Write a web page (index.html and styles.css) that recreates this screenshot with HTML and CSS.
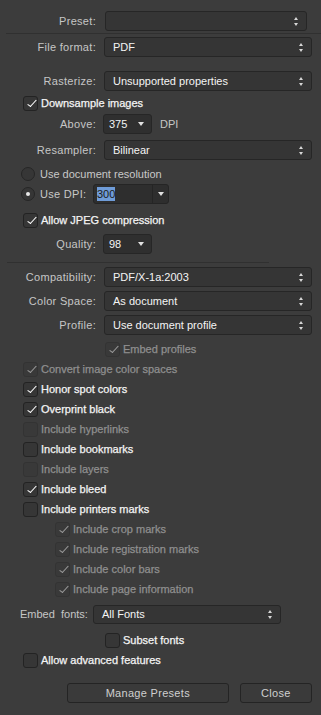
FILE: index.html
```html
<!DOCTYPE html>
<html lang="en">
<head>
    <meta charset="UTF-8">
    <meta name="viewport" content="width=device-width, initial-scale=1.0">
    <title>Export PDF</title>
    <link rel="stylesheet" href="styles.css">
</head>
<body>
    <div class="dialog">
        <div class="field field-preset">
            <span class="field-label">Preset:</span>
            <div class="select select-preset"><span></span><span class="updown"></span></div>
        </div>
        <div class="sep sep-top"></div>

        <div class="field mt-3">
            <span class="field-label">File format:</span>
            <div class="select"><span>PDF</span><span class="updown"></span></div>
        </div>
        <div class="field mt-14">
            <span class="field-label">Rasterize:</span>
            <div class="select"><span>Unsupported properties</span><span class="updown"></span></div>
        </div>

        <label class="check indent-1 mt-2">
            <span class="box checked"></span>
            <span class="check-text">Downsample images</span>
        </label>
        <div class="field mt-1">
            <span class="field-label">Above:</span>
            <div class="mini-select"><span>375</span><span class="down"></span></div>
            <span class="unit">DPI</span>
        </div>
        <div class="field mt-6">
            <span class="field-label">Resampler:</span>
            <div class="select"><span>Bilinear</span><span class="updown"></span></div>
        </div>

        <label class="radio-row mt-4">
            <span class="radio"></span>
            <span class="radio-text">Use document resolution</span>
        </label>
        <label class="radio-row">
            <span class="radio selected"></span>
            <span class="radio-text dpi-text">Use DPI:</span>
            <span class="combo">
                <span class="combo-value"><span class="highlight">300</span></span>
                <span class="combo-btn"><span class="down"></span></span>
            </span>
        </label>

        <label class="check indent-1 mt-6">
            <span class="box checked"></span>
            <span class="check-text">Allow JPEG compression</span>
        </label>
        <div class="field mt-4">
            <span class="field-label">Quality:</span>
            <div class="mini-select"><span>98</span><span class="down"></span></div>
        </div>

        <div class="sep sep-mid"></div>

        <div class="field mt-4">
            <span class="field-label">Compatibility:</span>
            <div class="select"><span>PDF/X-1a:2003</span><span class="updown"></span></div>
        </div>
        <div class="field mt-4">
            <span class="field-label">Color Space:</span>
            <div class="select"><span>As document</span><span class="updown"></span></div>
        </div>
        <div class="field mt-4">
            <span class="field-label">Profile:</span>
            <div class="select"><span>Use document profile</span><span class="updown"></span></div>
        </div>

        <label class="check indent-3 mt-4 disabled">
            <span class="box checked"></span>
            <span class="check-text">Embed profiles</span>
        </label>
        <label class="check indent-1 disabled">
            <span class="box checked"></span>
            <span class="check-text">Convert image color spaces</span>
        </label>
        <label class="check indent-1">
            <span class="box checked"></span>
            <span class="check-text">Honor spot colors</span>
        </label>
        <label class="check indent-1">
            <span class="box checked"></span>
            <span class="check-text">Overprint black</span>
        </label>
        <label class="check indent-1 disabled">
            <span class="box"></span>
            <span class="check-text">Include hyperlinks</span>
        </label>
        <label class="check indent-1">
            <span class="box"></span>
            <span class="check-text">Include bookmarks</span>
        </label>
        <label class="check indent-1 disabled">
            <span class="box"></span>
            <span class="check-text">Include layers</span>
        </label>
        <label class="check indent-1">
            <span class="box checked"></span>
            <span class="check-text">Include bleed</span>
        </label>
        <label class="check indent-1">
            <span class="box"></span>
            <span class="check-text">Include printers marks</span>
        </label>
        <label class="check indent-2 disabled">
            <span class="box checked"></span>
            <span class="check-text">Include crop marks</span>
        </label>
        <label class="check indent-2 disabled">
            <span class="box checked"></span>
            <span class="check-text">Include registration marks</span>
        </label>
        <label class="check indent-2 disabled">
            <span class="box checked"></span>
            <span class="check-text">Include color bars</span>
        </label>
        <label class="check indent-2 disabled">
            <span class="box checked"></span>
            <span class="check-text">Include page information</span>
        </label>

        <div class="fonts-row">
            <span class="fonts-label">Embed&nbsp; fonts:</span>
            <div class="select select-fonts"><span>All Fonts</span><span class="updown"></span></div>
        </div>
        <label class="check indent-3 mt-6">
            <span class="box"></span>
            <span class="check-text">Subset fonts</span>
        </label>
        <label class="check indent-1">
            <span class="box"></span>
            <span class="check-text">Allow advanced features</span>
        </label>

        <div class="buttons">
            <button type="button" class="btn btn-wide">Manage Presets</button>
            <button type="button" class="btn btn-close">Close</button>
        </div>
    </div>
</body>
</html>
```

FILE: styles.css
```css
/* Base */
* {
    margin: 0;
    padding: 0;
    box-sizing: border-box;
}

body {
    font-family: "Liberation Sans", Arial, sans-serif;
    font-size: 11px;
    background-color: #3c3c3c;
    color: #f2f2f2;
    width: 321px;
    height: 715px;
    overflow: hidden;
}

.dialog {
    padding: 11px 9px 0 7px;
}

/* Spacing helpers */
.mt-1 { margin-top: 1px; }
.mt-2 { margin-top: 2px; }
.mt-3 { margin-top: 3px; }
.mt-4 { margin-top: 4px; }
.mt-6 { margin-top: 6px; }
.mt-14 { margin-top: 14px; }

/* Separators */
.sep {
    height: 1px;
    background-color: #303030;
}

.sep-top {
    margin: 2px -9px 0 -1px;
}

.sep-mid {
    margin: 8px 43px 0 0;
}

/* Label + control rows */
.field {
    display: flex;
    align-items: center;
    height: 20px;
}

.field-label {
    flex: none;
    width: 97px;
    padding-right: 8px;
    text-align: right;
    color: #c6c6c6;
    letter-spacing: 0.3px;
}

.select {
    flex: 1;
    height: 20px;
    display: flex;
    align-items: center;
    justify-content: space-between;
    padding: 0 7px 0 8px;
    background-color: #353535;
    border: 1px solid #262626;
    border-radius: 3px;
    color: #f4f4f4;
}

.select-preset {
    margin: 0 5px 0 1px;
}

.updown {
    position: relative;
    width: 5px;
    height: 9px;
}

.updown::before,
.updown::after {
    content: "";
    position: absolute;
    left: 0;
    border-left: 2.5px solid transparent;
    border-right: 2.5px solid transparent;
}

.updown::before {
    top: 0;
    border-bottom: 3px solid #d8d8d8;
}

.updown::after {
    bottom: 0;
    border-top: 3px solid #d8d8d8;
}

.down {
    width: 0;
    height: 0;
    border-left: 3px solid transparent;
    border-right: 3px solid transparent;
    border-top: 4px solid #e0e0e0;
}

.mini-select {
    flex: none;
    width: 49px;
    height: 20px;
    margin-left: -1px;
    display: flex;
    align-items: center;
    justify-content: space-between;
    padding: 0 7px 0 5px;
    background-color: #2f2f2f;
    border: 1px solid #262626;
    border-radius: 3px;
    color: #f4f4f4;
}

.unit {
    margin-left: 8px;
    color: #c6c6c6;
}

/* Checkboxes */
.check {
    display: flex;
    align-items: center;
    gap: 3px;
    height: 20px;
    color: #f4f4f4;
}

.indent-1 { padding-left: 16px; }
.indent-2 { padding-left: 48px; }
.indent-3 { padding-left: 98px; }

.box {
    position: relative;
    flex: none;
    width: 15px;
    height: 15px;
    background-color: #363636;
    border: 1px solid #232323;
    border-radius: 3px;
}

.box.checked::after {
    content: "";
    position: absolute;
    left: 6px;
    top: 1px;
    width: 3px;
    height: 8px;
    border-right: 1.5px solid #ffffff;
    border-bottom: 1.5px solid #ffffff;
    transform: rotate(35deg) skewX(-8deg);
}

.check-text {
    -webkit-text-stroke: 0.25px currentColor;
}

.check.disabled {
    color: #8f8f8f;
}

.check.disabled .box {
    background-color: #393939;
    border-color: #333333;
}

.check.disabled .box.checked::after {
    border-color: #9a9a9a;
}

/* Radios */
.radio-row {
    display: flex;
    align-items: center;
    height: 20px;
    padding-left: 14px;
    color: #c8c8c8;
}

.radio {
    position: relative;
    flex: none;
    width: 14px;
    height: 14px;
    margin-right: 5px;
    background-color: #363636;
    border: 1px solid #262626;
    border-radius: 50%;
}

.radio.selected::after {
    content: "";
    position: absolute;
    left: 4px;
    top: 4px;
    width: 4px;
    height: 4px;
    border-radius: 50%;
    background-color: #e8e8e8;
}

.dpi-text {
    width: 53px;
    letter-spacing: 0.3px;
}

.combo {
    display: flex;
    width: 76px;
    height: 20px;
    background-color: #2e2e2e;
    border: 1px solid #252525;
    border-radius: 3px;
}

.combo-value {
    flex: 1;
    display: flex;
    align-items: center;
    padding-left: 3px;
}

.highlight {
    background-color: #6f9cd8;
    color: #1b1b1b;
    padding: 1px 0;
}

.combo-btn {
    width: 16px;
    display: flex;
    align-items: center;
    justify-content: center;
    border-left: 1px solid #252525;
}

/* Embed fonts */
.fonts-row {
    display: flex;
    align-items: center;
    height: 20px;
    margin-top: 5px;
    padding-left: 13px;
}

.fonts-label {
    width: 73px;
    color: #c6c6c6;
}

.select-fonts {
    flex: none;
    width: 188px;
    height: 19px;
}

/* Buttons */
.buttons {
    display: flex;
    gap: 11px;
    margin-top: 13px;
    padding-left: 60px;
}

.btn {
    height: 20px;
    font-family: "Liberation Sans", Arial, sans-serif;
    font-size: 11px;
    letter-spacing: 0.3px;
    color: #cfcfcf;
    background-color: #3a3a3a;
    border: 1px solid #242424;
    border-radius: 3px;
}

.btn-wide {
    width: 163px;
}

.btn-close {
    width: 73px;
}
```
